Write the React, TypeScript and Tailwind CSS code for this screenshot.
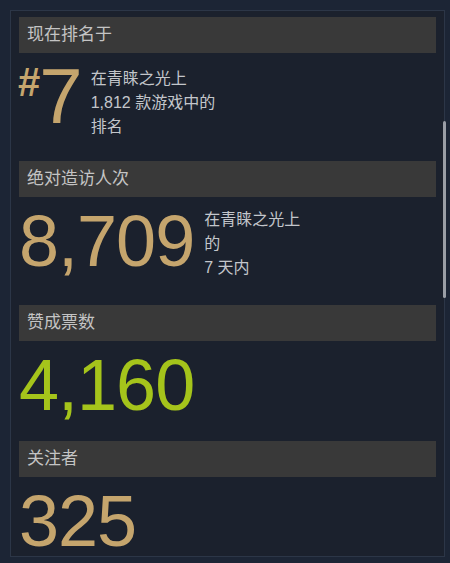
const font = { fontFamily: '"Liberation Sans", Arial, "Noto Sans CJK SC", sans-serif' };

function Header({ title }: { title: string }) {
  return (
    <div className="h-[36px] bg-[#393939] pl-[8px] flex items-center text-[17px] text-[#c4c4c4]">
      {title}
    </div>
  );
}

function SideText({ lines }: { lines: string[] }) {
  return (
    <div className="text-[16px] leading-[24px] text-[#c3c6cb]">
      {lines.map((l) => (
        <div key={l}>{l}</div>
      ))}
    </div>
  );
}

export default function App() {
  return (
    <div
      style={font}
      className="w-[450px] h-[563px] overflow-hidden bg-[#1c2535] pt-[10px] pl-[10px] pr-[5px]"
    >
      <div className="relative h-[547px] border border-[#2c3647] bg-[#1b212d] px-[8px] pt-[6px]">
        {/* scrollbar */}
        <div className="absolute right-[-2px] top-[110px] h-[177px] w-[3px] rounded-full bg-[#9a9ea6]" />

        <section className="h-[144px]">
          <Header title="现在排名于" />
          <div className="flex items-start mt-[9px]">
            <div className="flex items-start text-[#c5a56d] ml-[-1px]">
              <span className="text-[40px] font-bold leading-none mt-[0px]">#</span>
              <span className="text-[78px] leading-none mt-[-5px] ml-[-1px]">7</span>
            </div>
            <div className="ml-[8px] mt-[5px]">
              <SideText lines={["在青睐之光上", "1,812 款游戏中的", "排名"]} />
            </div>
          </div>
        </section>

        <section className="h-[144px]">
          <Header title="绝对造访人次" />
          <div className="flex items-start mt-[8px]">
            <span className="text-[72px] tracking-[-1px] leading-none text-[#c5a56d]">8,709</span>
            <div className="ml-[10px] mt-[3px]">
              <SideText lines={["在青睐之光上", "的", "7 天内"]} />
            </div>
          </div>
        </section>

        <section className="h-[136px]">
          <Header title="赞成票数" />
          <div className="mt-[8px] text-[72px] tracking-[-1px] leading-none text-[#a5c41b]">4,160</div>
        </section>

        <section>
          <Header title="关注者" />
          <div className="mt-[8px] text-[72px] tracking-[-1px] leading-none text-[#c5a56d]">325</div>
        </section>
      </div>
    </div>
  );
}
